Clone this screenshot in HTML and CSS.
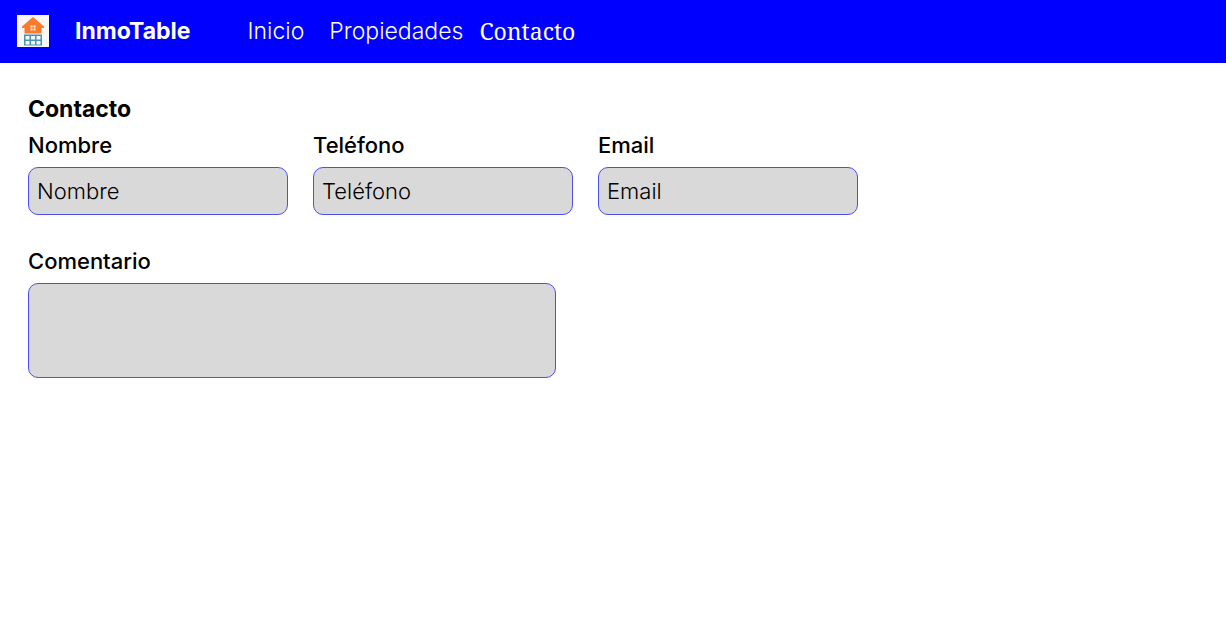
FILE: index.html
```html
<!DOCTYPE html>
<html lang="es">
<head>
  <meta charset="utf-8">
  <meta name="viewport" content="width=device-width, initial-scale=1">
  <title>InmoTable - Contacto</title>
  <link rel="stylesheet" href="styles.css">
</head>
<body>
  <header class="topbar">
    <svg class="logo" viewBox="0 0 32 32" aria-hidden="true">
      <rect width="32" height="32" fill="#f8f7f3"/>
      <path d="M16 2 27 11.500V13H24.500V18.500H7.500V13H5V11.500Z" fill="#fb7a2b"/>
      <path d="M13.500 10.500h2v2h-2zM16.500 10.500h2v2h-2zM13.500 13.500h2v2h-2zM16.500 13.500h2v2h-2z" fill="#fdf3ea"/>
      <path d="M7 19.500H25V30.500H7Z" fill="#4595b9"/>
      <path d="M8.500 21h4v3.500h-4zM14 21h4v3.500h-4zM19.500 21h4v3.500h-4zM8.500 26h4v3.500h-4zM14 26h4v3.500h-4zM19.500 26h4v3.500h-4z" fill="#f8f7f3"/>
    </svg>
    <a class="brand" href="#">InmoTable</a>
    <nav class="nav">
      <a class="nav-link" href="#">Inicio</a>
      <a class="nav-link" href="#">Propiedades</a>
      <a class="nav-link nav-link-current" href="#" aria-current="page">Contacto</a>
    </nav>
  </header>
  <main class="content">
    <h1 class="title">Contacto</h1>
    <form class="form">
      <div class="row">
        <div class="field">
          <label class="label" for="nombre">Nombre</label>
          <input class="control" id="nombre" type="text" placeholder="Nombre">
        </div>
        <div class="field">
          <label class="label" for="telefono">Teléfono</label>
          <input class="control" id="telefono" type="tel" placeholder="Teléfono">
        </div>
        <div class="field">
          <label class="label" for="email">Email</label>
          <input class="control" id="email" type="email" placeholder="Email">
        </div>
      </div>
      <div class="field field-comment">
        <label class="label" for="comentario">Comentario</label>
        <textarea class="control control-comment" id="comentario"></textarea>
      </div>
    </form>
  </main>
</body>
</html>
```
FILE: styles.css
```css
*,
*::before,
*::after {
  box-sizing: border-box;
}

body {
  margin: 0;
  background: #fff;
  color: #000;
  font-family: Inter, sans-serif;
  font-size: 23px;
  line-height: 28px;
}

.topbar {
  display: flex;
  align-items: center;
  padding: 15px 17px 16px;
  background: #00f;
}

.logo {
  flex: none;
  width: 32px;
  height: 32px;
}

.brand {
  margin-left: 26px;
  color: #fff;
  font-weight: 700;
  text-decoration: none;
}

.nav {
  display: flex;
  align-items: center;
  gap: 25px;
  margin-left: 57px;
}

.nav-link {
  color: #fff;
  font-weight: 300;
  text-decoration: none;
}

.nav-link-current {
  margin-left: -9px;
  font-family: "Noto Serif", "DejaVu Serif", serif;
  font-weight: 400;
}

.content {
  padding: 32px 28px;
}

.title {
  margin: 0 0 8px;
  font-size: 23px;
  font-weight: 700;
}

.form {
  display: grid;
  gap: 32px;
}

.row {
  display: grid;
  grid-template-columns: repeat(3, minmax(0, 260px));
  gap: 25px;
}

.field {
  display: grid;
  gap: 8px;
}

.field-comment {
  max-width: 528px;
}

.label {
  font-size: 22px;
  font-weight: 500;
}

.control {
  display: block;
  width: 100%;
  height: 48px;
  padding: 0 8px;
  border: 1px solid #4d4df0;
  border-radius: 10px;
  background: #d9d9d9;
  color: #000;
  font: inherit;
  font-size: 22px;
  font-weight: 300;
}

.control::placeholder {
  color: #000;
  opacity: 1;
}

.control-comment {
  height: 95px;
  padding: 8px;
  resize: none;
}
```
